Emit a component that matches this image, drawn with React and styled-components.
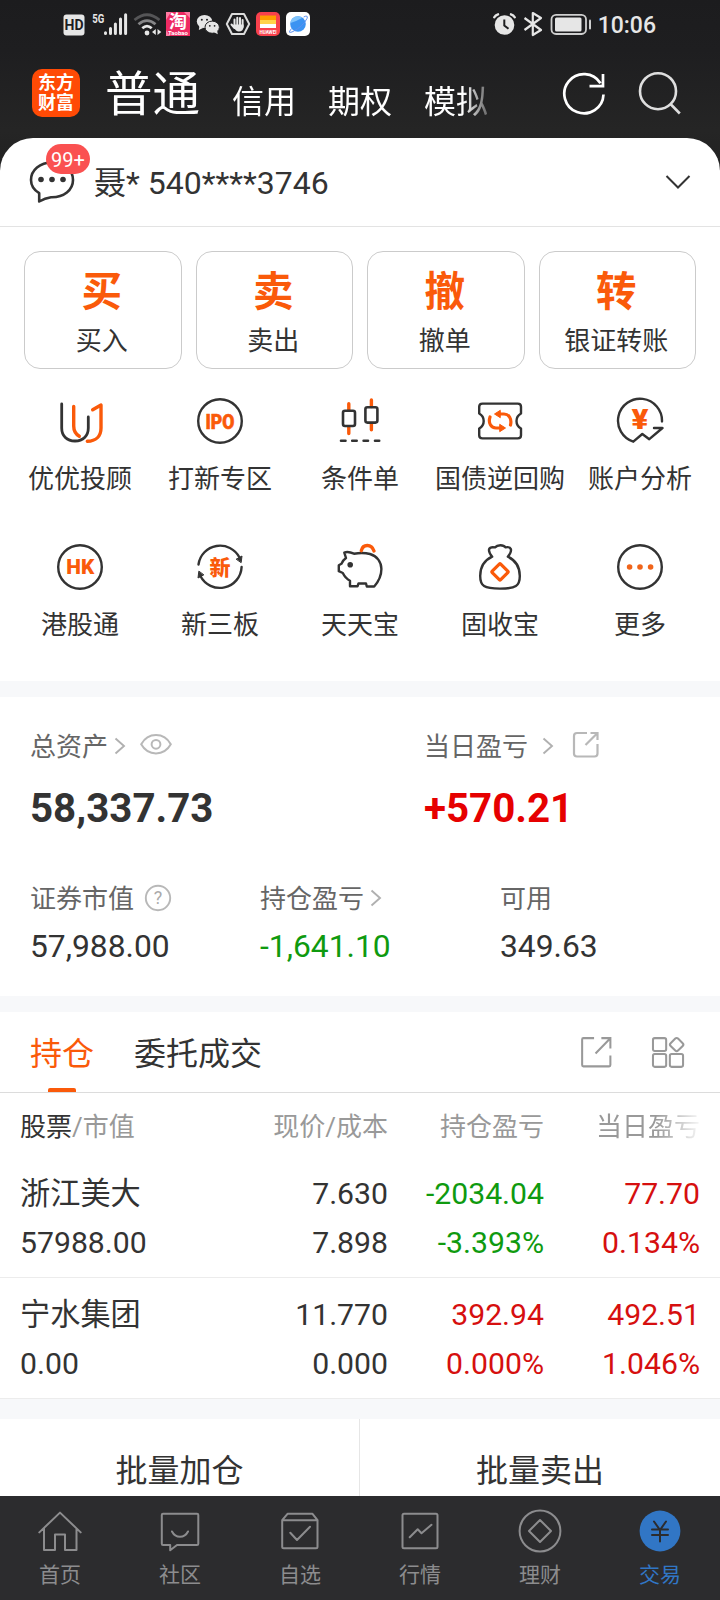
import React from 'react'
import styled, { createGlobalStyle } from 'styled-components'

const ORANGE = '#fa5a0a'
const DARK = '#333333'
const RED = '#d60f0f'
const GREEN = '#0f9a0f'

const accountTabs = ['信用', '期权', '模拟']

const mainActions = [
  { mark: '买', label: '买入' },
  { mark: '卖', label: '卖出' },
  { mark: '撤', label: '撤单' },
  { mark: '转', label: '银证转账' },
]

const positions = [
  {
    name: '浙江美大',
    value: '57988.00',
    price: '7.630',
    cost: '7.898',
    profit: '-2034.04',
    profitRate: '-3.393%',
    profitColor: GREEN,
    day: '77.70',
    dayRate: '0.134%',
  },
  {
    name: '宁水集团',
    value: '0.00',
    price: '11.770',
    cost: '0.000',
    profit: '392.94',
    profitRate: '0.000%',
    profitColor: RED,
    day: '492.51',
    dayRate: '1.046%',
  },
]

/* ---------- icons ---------- */

const Icon = ({ size = 48, color = DARK, width = 2.4, children }) => (
  <svg width={size} height={size} viewBox="0 0 48 48" fill="none" stroke={color} strokeWidth={width} strokeLinecap="round" strokeLinejoin="round">
    {children}
  </svg>
)

const AdvisorIcon = () => (
  <Icon width={2.8}>
    <path d="M5.7 7V31C5.7 39 11 44 19 44S32.3 39 32.3 31V20" />
    <path stroke={ORANGE} strokeWidth="3.4" d="M17.7 9.5V29C17.7 34 19.5 37 23.3 39.3M36.7 12.8L45 8V31C45 39 40 44.3 31.3 44.3" />
  </Icon>
)

const IpoIcon = () => (
  <Icon>
    <circle cx="24" cy="24" r="21.8" />
    <IconText x="24" y="31.5" $size={21} $heavy textLength="29" lengthAdjust="spacingAndGlyphs">IPO</IconText>
  </Icon>
)

const CandleIcon = () => (
  <Icon width={2.6}>
    <path stroke={ORANGE} strokeWidth="3.4" d="M12.8 6.8V13M12.8 30V36.5M35.4 3V9.5M35.4 27V32.8" />
    <rect x="7" y="13.7" width="12" height="15.3" rx="2" />
    <rect x="29.4" y="10.3" width="12" height="15.3" rx="2" />
    <path d="M5 43.7H9.5M16.2 43.7H20.7M27.6 43.7H32M39 43.7H43.2" />
  </Icon>
)

const TicketIcon = () => (
  <Icon>
    <path d="M6.5 6.6H41.7Q45 6.6 45 9.8V16.5C41.5 18.5 40.5 21 40.5 24S41.5 29.5 45 31.5V38.2Q45 41.4 41.7 41.4H6.5Q3.2 41.4 3.2 38.2V31.5C6.7 29.5 7.7 27 7.7 24S6.7 18.5 3.2 16.5V9.8Q3.2 6.6 6.5 6.6Z" />
    <path stroke={ORANGE} strokeWidth="3.2" d="M14 20C12 26 15 31 20 31H25M34.5 28C36 22 33 17 28 17H23" />
    <path fill={ORANGE} stroke={ORANGE} strokeWidth="1" d="M24 27.5L29.5 31L24 34.5ZM24 13.5L18.5 17L24 20.5Z" />
  </Icon>
)

const AnalysisIcon = () => (
  <Icon>
    <path d="M46 24.5A22 22 0 1 0 17.3 44.7L26.3 37L33.3 42.2L46.5 31H38" />
    <IconText x="24" y="32" $size={27} textLength="17" lengthAdjust="spacingAndGlyphs">¥</IconText>
  </Icon>
)

const HkIcon = () => (
  <Icon>
    <circle cx="24" cy="24" r="21.8" />
    <IconText x="24.3" y="31" $size={20} textLength="28" lengthAdjust="spacingAndGlyphs">HK</IconText>
  </Icon>
)

const NewBoardIcon = () => (
  <Icon>
    <path d="M2.5 21.5A21.8 21.8 0 0 1 43.5 14.5M45.6 24A21.8 21.8 0 0 1 4.4 33" />
    <path fill={DARK} strokeWidth="1" d="M40.5 16L46 13L45.2 19.3ZM7.5 32L2 35L2.8 28.5Z" />
    <IconText x="24" y="31.5" $size={21}>新</IconText>
  </Icon>
)

const PiggyIcon = () => (
  <Icon>
    <path d="M8.3 9.6Q12 8 18 10.7C24 9.7 29 9.7 34 11C41 13 45.4 19 45.4 26C45.4 32 43 38 38.2 43.5H30.8L30 40.5H22.5L21.5 43.3H14V37.8C10.5 36 8.5 33.5 6.8 30L2.8 28.2V22.2L5.4 20.8C6.2 18.6 7.8 16.6 10 15Z" />
    <circle cx="14.2" cy="21.7" r="1.6" fill={DARK} />
    <path stroke={ORANGE} strokeWidth="3.4" d="M25.3 7.7C27 .8 35.5 .8 38 8" />
  </Icon>
)

const BagIcon = () => (
  <Icon>
    <path d="M16.2 13.7C8 17.5 4.2 24 4.2 33C4.2 43 8 45.6 24 45.6S43.8 43 43.8 33C43.8 24 40 17.5 31.8 13.7C34.5 10.5 35.5 8 34.8 6C34 3.8 31.5 4 29.5 4.4C27.5 1.5 21.5 1.5 19 4.4C16.5 4 14 3.8 13.2 6C12.5 8 13.5 10.5 16.2 13.7Z" />
    <rect x="18" y="22.8" width="12" height="12" rx="1" transform="rotate(45 24 28.8)" stroke={ORANGE} strokeWidth="3.2" />
  </Icon>
)

const MoreIcon = () => (
  <Icon>
    <circle cx="24" cy="24" r="21.8" />
    <g fill="#f0641a" stroke="none">
      <circle cx="13.6" cy="24" r="2.8" />
      <circle cx="24" cy="24" r="2.8" />
      <circle cx="34.6" cy="24" r="2.8" />
    </g>
  </Icon>
)

const services = [
  { label: '优优投顾', icon: <AdvisorIcon /> },
  { label: '打新专区', icon: <IpoIcon /> },
  { label: '条件单', icon: <CandleIcon /> },
  { label: '国债逆回购', icon: <TicketIcon /> },
  { label: '账户分析', icon: <AnalysisIcon /> },
  { label: '港股通', icon: <HkIcon /> },
  { label: '新三板', icon: <NewBoardIcon /> },
  { label: '天天宝', icon: <PiggyIcon /> },
  { label: '固收宝', icon: <BagIcon /> },
  { label: '更多', icon: <MoreIcon /> },
]

const GREY = '#8c8c8e'

const navItems = [
  {
    label: '首页',
    icon: <path d="M3.3 25.4L24 5.6L44.7 25.4M8 21.5V43H19V27.5H29V43H40.5V21.5" />,
  },
  {
    label: '社区',
    icon: <path d="M7 6.8H41Q42.3 6.8 42.3 8V36.8Q42.3 38 41 38H21L14.2 43.3V38H7Q5.8 38 5.8 36.8V8Q5.8 6.8 7 6.8ZM16 24.5C19.5 31.5 28.5 31.5 32 24.5" />,
  },
  {
    label: '自选',
    icon: <path d="M6.2 13.2H41.5V39.8Q41.5 41.3 40 41.3H7.7Q6.2 41.3 6.2 39.8V13.2L11.5 6.8H36.5L41.5 13.2M14.3 25.7L21 33L34 19.7" />,
  },
  {
    label: '行情',
    icon: <path d="M8 6.8H40Q41.5 6.8 41.5 8.3V39.8Q41.5 41.3 40 41.3H8Q6.5 41.3 6.5 39.8V8.3Q6.5 6.8 8 6.8ZM13.7 30.2L21.7 22.2L25.5 26.2L35.5 17.8" />,
  },
  {
    label: '理财',
    icon: (
      <>
        <circle cx="24" cy="24" r="20.4" />
        <path d="M24 13L35 24L24 35L13 24Z" />
      </>
    ),
  },
  {
    label: '交易',
    active: true,
    icon: (
      <>
        <circle cx="24" cy="24" r="20.4" fill="#3176c5" stroke="none" />
        <path stroke="#2c2c2e" d="M18 14.5L24 23L30 14.5M24 23V34.5M16 22.5H32M16 28H32" />
      </>
    ),
  },
]

const Arrow = () => (
  <svg width="12" height="18" viewBox="0 0 12 18" fill="none" stroke="#b0b0b0" strokeWidth="1.9">
    <path d="M1.5 1.5L10 9L1.5 16.5" />
  </svg>
)

const StatusIcons = () => (
  <svg width="260" height="48" viewBox="60 0 260 48" fill="none">
    <rect x="63.5" y="14.5" width="21" height="21" rx="3" fill="#e6e6e6" />
    <StatusText x="74" y="30.2" $size={14} $color="#1c1c1e">HD</StatusText>
    <StatusText x="98.3" y="22.8" $size={12.5} textLength="12" lengthAdjust="spacingAndGlyphs">5G</StatusText>
    <path stroke="#e6e6e6" strokeWidth="3" strokeLinecap="round" d="M105.5 32.7V33.4M110.5 28.5V33.4M115.4 24V33.4M120.5 19V33.4M125.6 14.7V33.4" />
    <g strokeWidth="2.8">
      <path stroke="#555557" d="M134.5 20Q147 9.5 159.5 20" />
      <path stroke="#858587" d="M138.5 24.3Q147 17 155.5 24.3" />
      <path stroke="#e6e6e6" d="M142.3 28.2Q147 24 151.7 28.2" />
    </g>
    <circle cx="147" cy="33" r="2.4" fill="#e6e6e6" />
    <path fill="#e6e6e6" d="M155.8 29V35L152 32ZM157.5 29V35L161.3 32Z" />

    <rect x="166" y="12" width="24" height="24" fill="#ee2a62" />
    <path fill="#ff7aa2" d="M166 12H171L166 20ZM190 12V18L184 12ZM166 30L170 36H166Z" />
    <StatusText x="178" y="28.3" $size={18} $color="#fff">淘</StatusText>
    <StatusText x="178" y="35.3" $size={6} $color="#fff">Taobao</StatusText>

    <ellipse cx="204.5" cy="21.5" rx="7.7" ry="6.6" fill="#e6e6e6" />
    <path fill="#e6e6e6" d="M199.5 26L198.8 30L203.5 27.8Z" />
    <ellipse cx="212.2" cy="27.2" rx="7.2" ry="6.1" fill="#e6e6e6" stroke="#1e1e20" strokeWidth="1" />
    <path fill="#e6e6e6" d="M213.5 32L217.8 34.2L217 30Z" />
    <g fill="#1e1e20">
      <circle cx="201.8" cy="19.7" r="1" />
      <circle cx="207" cy="19.7" r="1" />
      <circle cx="209.8" cy="25.8" r=".9" />
      <circle cx="214.6" cy="25.8" r=".9" />
    </g>

    <path stroke="#dcdcdc" strokeWidth="2" strokeLinejoin="round" d="M232 14H244L249.2 24L244 34H232L226.8 24Z" />
    <path stroke="#e6e6e6" strokeWidth="2" strokeLinecap="round" d="M234.5 19.5V26M237.3 17.8V26M240 18V26M242.6 20V27M231.5 24.5L234.5 28" />
    <path fill="#e6e6e6" d="M233.5 24.5H243.6V27Q243 31.5 238.8 31.5Q236 31.5 233.5 27Z" />

    <rect x="256" y="12" width="24" height="24" rx="5" fill="#f8414c" />
    <path fill="#ff9d00" d="M260 15.5H276V20H260Z" />
    <path fill="#ffd34a" d="M260 20H276V24H260Z" />
    <path fill="#fff" d="M260 24H276V28H260Z" />
    <StatusText x="268" y="33.6" $size={4.6} $color="#fff">HUAWEI</StatusText>

    <rect x="286" y="12" width="24" height="24" rx="5" fill="#fff" />
    <circle cx="298" cy="24" r="7.8" fill="#3b93f2" />
    <path fill="#7fc3fb" d="M290.5 23Q297 21 302.5 17.8Q299 15.4 295 16.8Q291 18.4 290.5 23Z" />
    <path stroke="#5d8ff0" strokeWidth="1" d="M291.5 28.5Q286.8 34.5 293 31.5Q303 26.3 307 18.5Q308.5 14.6 303.6 17" />
  </svg>
)

const StatusRight = () => (
  <svg width="102" height="48" viewBox="490 0 102 48" fill="none">
    <circle cx="504.5" cy="25" r="9.8" fill="#e6e6e6" />
    <path stroke="#e6e6e6" strokeWidth="2.4" strokeLinecap="round" d="M494.3 17.3Q495.5 15 498 14.3M511 14.3Q513.5 15 514.7 17.3" />
    <path stroke="#1e1e20" strokeWidth="2" d="M504.3 19.5V25.5L508.5 28.8" />
    <path stroke="#e6e6e6" strokeWidth="2.2" strokeLinejoin="round" d="M524.5 18L541 30L532.8 35V13L541 18L524.5 30" />
    <rect x="551.5" y="14.8" width="34.5" height="19.2" rx="4.5" stroke="#cfcfcf" strokeWidth="1.8" />
    <rect x="555" y="17.5" width="26.5" height="14" rx="1.5" fill="#e6e6e6" />
    <path stroke="#cfcfcf" strokeWidth="2" strokeLinecap="round" d="M590 20.5V28.5" />
  </svg>
)

const App = () => (
  <>
    <GlobalStyle />
    <Screen>
      <StatusBar>
        <StatusIcons />
        <StatusGroup>
          <StatusRight />
          <Clock>10:06</Clock>
        </StatusGroup>
      </StatusBar>

      <TopBar>
        <Logo>
          <span>东方</span>
          <span>财富</span>
        </Logo>
        <TabStrip>
          <CurrentAccount>普通</CurrentAccount>
          {accountTabs.map((tab) => (
            <AccountTab key={tab}>{tab}</AccountTab>
          ))}
        </TabStrip>
        <TopTools>
          <svg width="44" height="44" viewBox="0 0 44 44" fill="none" stroke="#fff" strokeWidth="2.7">
            <path d="M41.5 23.5A19.6 19.6 0 1 1 38.5 12.3M27.5 15.2H41V3" />
          </svg>
          <svg width="44" height="44" viewBox="0 0 44 44" fill="none" stroke="#dedede" strokeWidth="2.6">
            <circle cx="20" cy="20.2" r="18" />
            <path d="M32.5 33L41.8 42.5" />
          </svg>
        </TopTools>
      </TopBar>

      <Sheet>
        <AccountRow>
          <Message>
            <svg width="46" height="44" viewBox="0 0 46 44" fill="none" stroke={DARK} strokeWidth="2.6" strokeLinejoin="round">
              <path d="M10.2 33.2C5 30 2 25.5 2 20C2 10 11 2.5 23 2.5S44 10 44 20S35 37.5 22 37.2Q16 38 10.2 41.5Z" />
              <g fill={DARK} stroke="none">
                <circle cx="12" cy="19.5" r="2.8" />
                <circle cx="23" cy="19.5" r="2.8" />
                <circle cx="34" cy="19.5" r="2.8" />
              </g>
            </svg>
            <Badge>99+</Badge>
          </Message>
          <AccountName>聂* 540****3746</AccountName>
          <svg width="26" height="16" viewBox="0 0 26 16" fill="none" stroke={DARK} strokeWidth="2">
            <path d="M1.5 2L13 13.5L24.5 2" />
          </svg>
        </AccountRow>

        <ActionGrid>
          {mainActions.map((item) => (
            <ActionCard key={item.label}>
              <ActionMark>{item.mark}</ActionMark>
              <ActionLabel>{item.label}</ActionLabel>
            </ActionCard>
          ))}
        </ActionGrid>

        <ServiceGrid>
          {services.map((item) => (
            <Service key={item.label}>
              {item.icon}
              <ServiceLabel>{item.label}</ServiceLabel>
            </Service>
          ))}
        </ServiceGrid>
      </Sheet>

      <Band $height={16} />

      <Assets>
        <TotalRow>
          <div>
            <AssetLabel>
              <span>总资产</span>
              <Gap $width={6} />
              <Arrow />
              <Gap $width={14} />
              <svg width="32" height="24" viewBox="0 0 32 24" fill="none" stroke="#b8b8b8" strokeWidth="2">
                <path d="M1.2 10.3C8 -2 24 -2 30.8 10.3C24 22.4 8 22.4 1.2 10.3Z" />
                <circle cx="16" cy="10.3" r="4.4" />
              </svg>
            </AssetLabel>
            <BigValue $color="#333">58,337.73</BigValue>
          </div>
          <div>
            <AssetLabel>
              <span>当日盈亏</span>
              <Gap $width={14} />
              <Arrow />
              <Gap $width={18} />
              <svg width="28" height="30" viewBox="0 0 28 30" fill="none" stroke="#b8b8b8" strokeWidth="2.2">
                <path d="M15 2H5Q2 2 2 5V22.5Q2 25.5 5 25.5H22.5Q25.5 25.5 25.5 22.5V13M13.5 14L25.5 2M18.5 2H25.5V9" />
              </svg>
            </AssetLabel>
            <BigValue $color="#e60000">+570.21</BigValue>
          </div>
        </TotalRow>
        <DetailRow>
          <div>
            <AssetLabel>
              <span>证券市值</span>
              <Gap $width={10} />
              <svg width="28" height="28" viewBox="0 0 28 28" fill="none" stroke="#b8b8b8" strokeWidth="1.9">
                <circle cx="14" cy="14" r="12.2" />
                <QuestionText x="14" y="20.3">?</QuestionText>
              </svg>
            </AssetLabel>
            <AssetValue>57,988.00</AssetValue>
          </div>
          <div>
            <AssetLabel>
              <span>持仓盈亏</span>
              <Gap $width={6} />
              <Arrow />
            </AssetLabel>
            <AssetValue $color={GREEN}>-1,641.10</AssetValue>
          </div>
          <div>
            <AssetLabel>
              <span>可用</span>
            </AssetLabel>
            <AssetValue>349.63</AssetValue>
          </div>
        </DetailRow>
      </Assets>

      <Band $height={16} />

      <ListTabs>
        <ListTab $active>持仓</ListTab>
        <ListTab>委托成交</ListTab>
        <ListTools>
          <svg width="33" height="33" viewBox="0 0 34 34" fill="none" stroke="#999" strokeWidth="2.1">
            <path d="M14.5 2.2H3.5Q2.2 2.2 2.2 3.5V30Q2.2 31.3 3.5 31.3H30Q31.3 31.3 31.3 30V20M16 18L31 2.5M22 2.2H31.3V13" />
          </svg>
          <svg width="35" height="33" viewBox="0 0 36 34" fill="none" stroke="#999" strokeWidth="2.1">
            <rect x="2" y="2.2" width="13.6" height="13.2" rx="1.8" />
            <rect x="2" y="18.6" width="13.6" height="13.2" rx="1.8" />
            <rect x="19.4" y="18.6" width="13.6" height="13.2" rx="1.8" />
            <rect x="21" y="3.4" width="10.8" height="10.8" rx="2" transform="rotate(45 26.4 8.8)" />
          </svg>
        </ListTools>
      </ListTabs>

      <TableHead>
        <HeadCell $left>
          <b>股票</b>/市值
        </HeadCell>
        <HeadCell>现价/成本</HeadCell>
        <HeadCell>持仓盈亏</HeadCell>
        <HeadCell $fade>当日盈亏</HeadCell>
      </TableHead>
      {positions.map((p) => (
        <PositionRow key={p.name}>
          <Cell $left>
            <span>{p.name}</span>
            <span>{p.value}</span>
          </Cell>
          <Cell>
            <span>{p.price}</span>
            <span>{p.cost}</span>
          </Cell>
          <Cell $color={p.profitColor}>
            <span>{p.profit}</span>
            <span>{p.profitRate}</span>
          </Cell>
          <Cell $color={RED}>
            <span>{p.day}</span>
            <span>{p.dayRate}</span>
          </Cell>
        </PositionRow>
      ))}

      <Band $height={20} />

      <BatchRow>
        <BatchButton>批量加仓</BatchButton>
        <BatchButton>批量卖出</BatchButton>
      </BatchRow>

      <BottomNav>
        {navItems.map((item) => (
          <NavItem key={item.label} $active={item.active}>
            <Icon color={GREY} width={2}>{item.icon}</Icon>
            <span>{item.label}</span>
          </NavItem>
        ))}
      </BottomNav>
    </Screen>
  </>
)

export default App

const GlobalStyle = createGlobalStyle`
  * {
    box-sizing: border-box;
  }
  body {
    margin: 0;
    background: #fff;
    font-family: Roboto, "Noto Sans CJK SC", sans-serif;
    color: #333;
  }
  svg {
    display: block;
    flex: none;
  }
`

const Screen = styled.div`
  width: 720px;
  height: 1600px;
  display: flex;
  flex-direction: column;
  overflow: hidden;
  white-space: nowrap;
  background: linear-gradient(#1c1c1e 0, #1e1e20 50px, #252525 130px, #222 170px, #fff 171px);
`

const StatusBar = styled.div`
  height: 48px;
  flex: none;
  display: flex;
  justify-content: space-between;
  padding: 0 64px 0 60px;
`

const StatusGroup = styled.div`
  display: flex;
  align-items: center;
  gap: 6px;
`

const StatusText = styled.text`
  font-size: ${(p) => p.$size}px;
  font-weight: 700;
  fill: ${(p) => p.$color || '#e6e6e6'};
  text-anchor: middle;
`

const Clock = styled.div`
  font-size: 23px;
  font-weight: 500;
  color: #e6e6e6;
  line-height: 48px;
  padding-top: 3px;
`

const TopBar = styled.div`
  height: 90px;
  flex: none;
  display: flex;
  align-items: flex-start;
  padding: 0 38px 0 32px;
`

const Logo = styled.div`
  width: 48px;
  height: 48px;
  margin-top: 21px;
  border-radius: 10px;
  background: #ff4a05;
  color: #fff;
  font-size: 18px;
  font-weight: 700;
  line-height: 20px;
  display: flex;
  flex-direction: column;
  align-items: center;
  justify-content: center;
`

const TabStrip = styled.div`
  width: 382px;
  height: 90px;
  margin-left: 25px;
  display: flex;
  gap: 32px;
  color: #fff;
  overflow: hidden;
  mask-image: linear-gradient(90deg, #000 358px, transparent 394px);
`

const CurrentAccount = styled.div`
  font-size: 47.5px;
  line-height: 94px;
`

const AccountTab = styled.div`
  font-size: 32px;
  line-height: 108px;
`

const TopTools = styled.div`
  display: flex;
  gap: 32px;
  margin: 23px 0 0 auto;
`

const Sheet = styled.div`
  height: 543px;
  flex: none;
  border-radius: 33px 33px 0 0;
  background: #fff;
`

const AccountRow = styled.div`
  height: 89px;
  display: flex;
  align-items: center;
  padding: 0 29px;
  border-bottom: 1px solid #e3e3e3;
`

const Message = styled.div`
  position: relative;
  width: 46px;
  height: 44px;
`

const Badge = styled.div`
  position: absolute;
  left: 17px;
  top: -16px;
  width: 44px;
  height: 30px;
  border-radius: 15px;
  background: #fa5151;
  color: #fff;
  font-size: 20px;
  line-height: 33px;
  text-align: center;
`

const AccountName = styled.div`
  flex: 1;
  margin: 0 0 4px 19px;
  font-size: 32px;
`

const ActionGrid = styled.div`
  display: grid;
  grid-template-columns: repeat(4, 1fr);
  gap: 14px;
  padding: 24px 24px 0;
`

const ActionCard = styled.div`
  height: 118px;
  border: 1px solid #cbcbcb;
  border-radius: 16px;
  display: flex;
  flex-direction: column;
  align-items: center;
  padding: 16px 2px 0 0;
`

const ActionMark = styled.div`
  font-size: 40.5px;
  font-weight: 700;
  line-height: 48px;
  color: ${ORANGE};
`

const ActionLabel = styled.div`
  font-size: 26px;
  line-height: 40px;
  margin-top: 5px;
`

const ServiceGrid = styled.div`
  display: grid;
  grid-template-columns: repeat(5, 140px);
  grid-auto-rows: 146px;
  padding: 28px 10px 0;
`

const Service = styled.div`
  display: flex;
  flex-direction: column;
  align-items: center;
`

const ServiceLabel = styled.div`
  font-size: 26px;
  line-height: 40px;
  margin-top: 14px;
`

const IconText = styled.text`
  font-size: ${(p) => p.$size}px;
  font-weight: 900;
  fill: ${ORANGE};
  stroke: ${(p) => (p.$heavy ? ORANGE : 'none')};
  stroke-width: 0.6;
  text-anchor: middle;
`

const Band = styled.div`
  height: ${(p) => p.$height}px;
  flex: none;
  background: #f7f8fa;
`

const Assets = styled.div`
  height: 299px;
  flex: none;
  padding: 29px 30px 0;
  background: #fff;
`

const TotalRow = styled.div`
  display: grid;
  grid-template-columns: 394px 1fr;
`

const DetailRow = styled.div`
  display: grid;
  grid-template-columns: 230px 240px 1fr;
  margin-top: 45px;
`

const AssetLabel = styled.div`
  display: flex;
  align-items: center;
  height: 40px;
  font-size: 26px;
  color: #666;

  span {
    margin-bottom: 4px;
  }
`

const Gap = styled.div`
  width: ${(p) => p.$width}px;
`

const BigValue = styled.div`
  margin-top: 19px;
  font-size: 40.3px;
  font-weight: 700;
  line-height: 48px;
  color: ${(p) => p.$color};
`

const AssetValue = styled.div`
  margin-top: 8px;
  font-size: 31.8px;
  line-height: 40px;
  color: ${(p) => p.$color || '#333'};
`

const QuestionText = styled.text`
  font-size: 18px;
  fill: #aaa;
  stroke: none;
  text-anchor: middle;
`

const ListTabs = styled.div`
  height: 81px;
  flex: none;
  display: flex;
  gap: 40px;
  padding: 0 34px 0 30px;
  background: #fff;
  border-bottom: 1px solid #dcdcdc;
`

const ListTab = styled.div`
  position: relative;
  height: 80px;
  font-size: 32px;
  line-height: 84px;
  color: ${(p) => (p.$active ? ORANGE : '#333')};

  &::after {
    content: '';
    display: ${(p) => (p.$active ? 'block' : 'none')};
    position: absolute;
    left: 18px;
    bottom: 0;
    width: 28px;
    height: 4px;
    border-radius: 2px 2px 0 0;
    background: ${ORANGE};
  }
`

const ListTools = styled.div`
  display: flex;
  align-items: center;
  gap: 38px;
  margin-left: auto;
`

const tableColumns = `
  display: grid;
  grid-template-columns: 212px 156px 156px 156px;
  padding: 0 20px;
  background: #fff;
`

const TableHead = styled.div`
  ${tableColumns}
  height: 67px;
  flex: none;
`

const HeadCell = styled.div`
  font-size: 26px;
  line-height: 68px;
  color: #999;
  text-align: ${(p) => (p.$left ? 'left' : 'right')};
  ${(p) => p.$fade && 'mask-image: linear-gradient(90deg, #000 112px, transparent 160px);'}

  b {
    font-weight: 400;
    color: #333;
  }
`

const PositionRow = styled.div`
  ${tableColumns}
  height: 118px;
  flex: none;
  padding-top: 9px;
  border-bottom: 1px solid #ececec;

  & + & {
    height: 121px;
    padding-top: 12px;
  }
`

const Cell = styled.div`
  display: flex;
  flex-direction: column;
  align-items: ${(p) => (p.$left ? 'flex-start' : 'flex-end')};
  font-size: 30.2px;
  line-height: 49px;
  color: ${(p) => p.$color || '#333'};
`

const BatchRow = styled.div`
  height: 77px;
  flex: none;
  display: grid;
  grid-template-columns: 359px 1fr;
  background: #fff;
`

const BatchButton = styled.div`
  font-size: 32px;
  line-height: 104px;
  text-align: center;
  overflow: hidden;

  & + & {
    border-left: 1px solid #e6e6e6;
  }
`

const BottomNav = styled.div`
  height: 104px;
  flex: none;
  display: grid;
  grid-template-columns: repeat(6, 1fr);
  background: #2c2c2e;
`

const NavItem = styled.div`
  display: flex;
  flex-direction: column;
  align-items: center;
  padding-top: 11px;
  font-size: 21px;
  line-height: 30px;
  color: ${(p) => (p.$active ? '#3176c5' : GREY)};

  span {
    margin-top: 5px;
  }
`
